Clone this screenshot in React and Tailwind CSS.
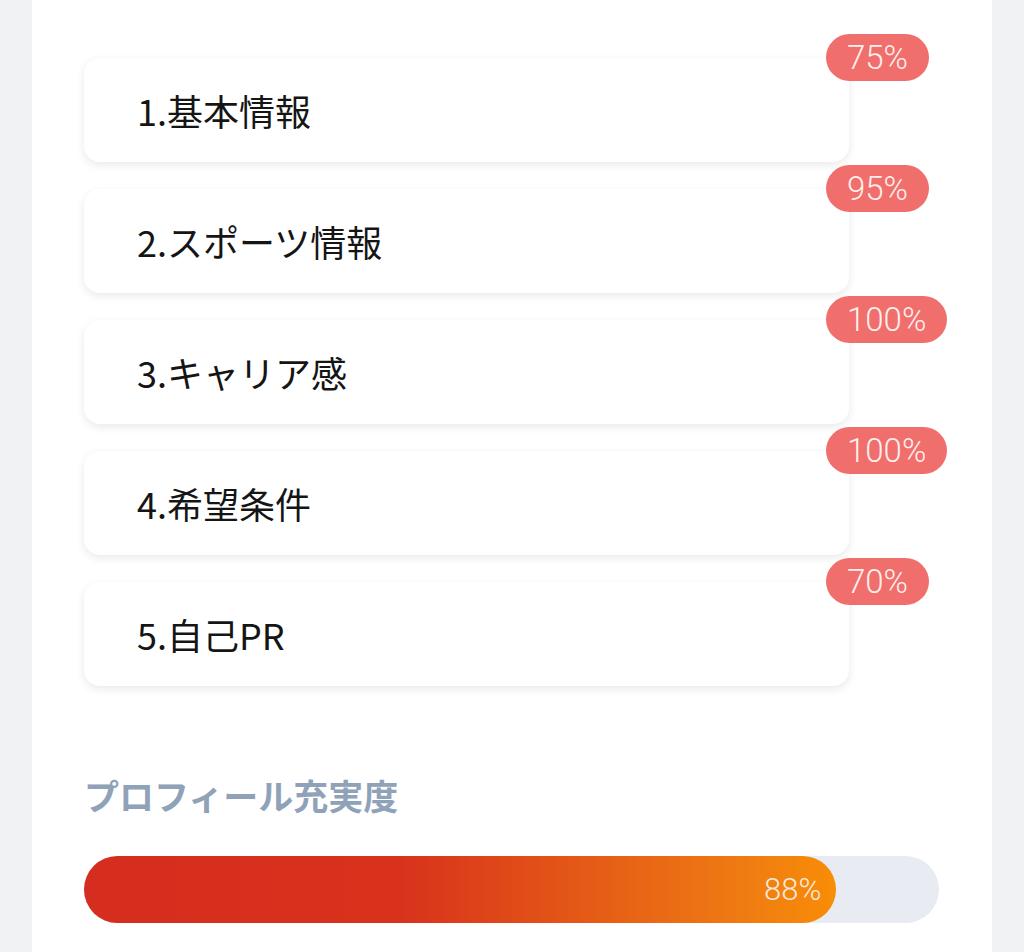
const sections = [
  { label: "1.基本情報", pct: 75 },
  { label: "2.スポーツ情報", pct: 95 },
  { label: "3.キャリア感", pct: 100 },
  { label: "4.希望条件", pct: 100 },
  { label: "5.自己PR", pct: 70 },
];

const total = 88;

export default function App() {
  return (
    <div
      className="min-h-[952px] bg-[#f1f2f4] px-8"
      style={{ fontFamily: '"Roboto", "Noto Sans CJK JP", sans-serif' }}
    >
      <div className="min-h-[952px] bg-white pl-[52px] pr-[53px] pt-[58px]">
        <div className="flex flex-col gap-[27px]">
          {sections.map((s) => (
            <div
              key={s.label}
              className="relative flex h-[104px] w-[765px] items-center rounded-2xl bg-white pl-[53px] shadow-[0_3px_10px_rgba(0,0,0,0.09)]"
            >
              <span className="text-[36px] leading-none text-[#151515]" style={{ fontFamily: '"Noto Sans CJK JP", sans-serif' }}>
                {s.label}
              </span>
              <span className="absolute left-[742px] top-[-24px] flex h-[47px] items-center rounded-full bg-[#f06e6c] px-[21px] text-[33px] font-light leading-none text-[#fff0ec]">
                {s.pct}%
              </span>
            </div>
          ))}
        </div>

        <h2
          className="mt-[91px] text-[35px] font-bold leading-none text-[#8fa2b7]"
          style={{ fontFamily: '"Noto Sans CJK JP", sans-serif' }}
        >
          プロフィール充実度
        </h2>

        <div className="mt-[44px] h-[67px] w-full rounded-full bg-[#e8ebf2]">
          <div
            className="flex h-full items-center justify-end rounded-full bg-[linear-gradient(90deg,#d52d1f_0%,#d8321c_42%,#ef7c12_88%,#f88d06_100%)] pr-[15px]"
            style={{ width: `${total}%` }}
          >
            <span className="text-[31px] font-light leading-none text-[#fde9dc]">{total}%</span>
          </div>
        </div>
      </div>
    </div>
  );
}
